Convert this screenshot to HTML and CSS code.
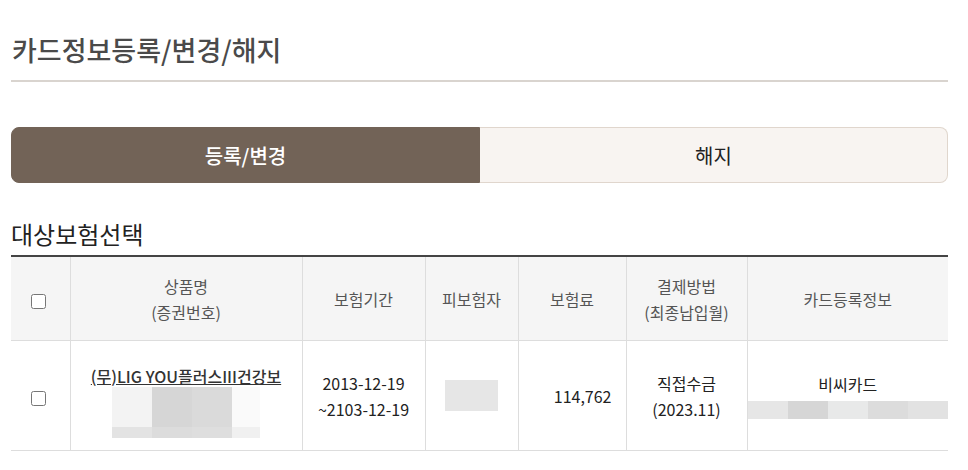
FILE: index.html
```html
<!DOCTYPE html>
<html>
<head>
    <meta charset="utf-8">
    <title>카드정보등록/변경/해지</title>
    <link rel="stylesheet" href="styles.css">
</head>
<body>
    <div class="wrap">
        <h1 class="page-title">카드정보등록/변경/해지</h1>

        <div class="tabs">
            <a href="#" class="tab active">등록/변경</a>
            <a href="#" class="tab">해지</a>
        </div>

        <h2 class="section-title">대상보험선택</h2>

        <table class="policy-table">
            <colgroup>
                <col style="width:59px">
                <col style="width:232px">
                <col style="width:123px">
                <col style="width:93px">
                <col style="width:108px">
                <col style="width:121px">
                <col style="width:201px">
            </colgroup>
            <thead>
                <tr>
                    <th><input type="checkbox" class="chk"></th>
                    <th>상품명<br>(증권번호)</th>
                    <th>보험기간</th>
                    <th>피보험자</th>
                    <th>보험료</th>
                    <th>결제방법<br>(최종납입월)</th>
                    <th>카드등록정보</th>
                </tr>
            </thead>
            <tbody>
                <tr>
                    <td><input type="checkbox" class="chk"></td>
                    <td class="product-cell">
                        <a href="#" class="product-name">(무)LIG YOU플러스III건강보</a>
                        <div class="mask mask-policy">
                            <span></span><span></span><span></span><span></span>
                            <span></span><span></span><span></span><span></span>
                        </div>
                    </td>
                    <td>2013-12-19<br>~2103-12-19</td>
                    <td><span class="mask-insured"></span></td>
                    <td class="amount">114,762</td>
                    <td>직접수금<br>(2023.11)</td>
                    <td class="card-cell">
                        <div class="card-name">비씨카드</div>
                        <div class="mask mask-card">
                            <span></span><span></span><span></span><span></span><span></span>
                        </div>
                    </td>
                </tr>
            </tbody>
        </table>
    </div>
</body>
</html>
```

FILE: styles.css
```css
html, body {
    margin: 0;
    padding: 0;
    background-color: #fff;
    font-family: "Noto Sans CJK KR", "Noto Sans", sans-serif;
    color: #222;
}

.wrap {
    padding: 0 20px 0 11px;
}

.page-title {
    margin: 32px 0 0;
    padding: 0 0 12px 1px;
    font-size: 27px;
    line-height: 36px;
    font-weight: 500;
    color: #4a4a4a;
    border-bottom: 2px solid #d9d4cf;
}

/* tabs */
.tabs {
    display: flex;
    margin-top: 45px;
}

.tab {
    flex: 1;
    display: flex;
    align-items: center;
    justify-content: center;
    height: 54px;
    font-size: 20px;
    color: #222;
    text-decoration: none;
    background-color: #f8f4f1;
    border: 1px solid #e0d6cd;
}

.tab:first-child {
    border-radius: 8px 0 0 8px;
}

.tab:last-child {
    border-left: none;
    border-radius: 0 8px 8px 0;
}

.tab.active {
    background-color: #726357;
    border-color: #726357;
    color: #fff;
    font-weight: 500;
}

.section-title {
    margin: 34px 0 4px;
    font-size: 24px;
    line-height: 34px;
    font-weight: 400;
    color: #222;
}

/* table */
.policy-table {
    width: 100%;
    table-layout: fixed;
    border-collapse: collapse;
    border-top: 2px solid #444;
}

.policy-table th,
.policy-table td {
    text-align: center;
    vertical-align: middle;
    border-bottom: 1px solid #ddd;
    border-left: 1px solid #ddd;
    padding: 0;
}

.policy-table th:first-child,
.policy-table td:first-child {
    border-left: none;
    padding-right: 4px;
}

.policy-table th {
    height: 83px;
    background-color: #f5f5f5;
    font-size: 16px;
    line-height: 26px;
    font-weight: 400;
    color: #555;
}

.policy-table td {
    height: 109px;
    font-size: 16px;
    line-height: 26px;
    color: #222;
}

.chk {
    width: 15px;
    height: 15px;
    margin: 0;
    vertical-align: middle;
}

.policy-table td.product-cell {
    height: 97px;
    padding-top: 12px;
}

.product-name {
    display: block;
    font-size: 16px;
    line-height: 22px;
    font-weight: 500;
    color: #333;
}

.policy-table td.amount {
    text-align: right;
    padding-right: 14px;
}

.card-name {
    font-size: 16px;
    line-height: 22px;
}

/* masked (blurred) values */
.mask {
    display: grid;
    margin: 0 auto;
}

.mask-policy {
    grid-template-columns: 40px 40px 40px 28px;
    grid-template-rows: 40px 11px;
    width: 148px;
}

.mask-policy span:nth-child(1) { background: #f3f3f3; }
.mask-policy span:nth-child(2) { background: #d6d6d6; }
.mask-policy span:nth-child(3) { background: #dadada; }
.mask-policy span:nth-child(4) { background: #fafafa; }
.mask-policy span:nth-child(5) { background: #e3e3e3; }
.mask-policy span:nth-child(6) { background: #dcdcdc; }
.mask-policy span:nth-child(7) { background: #dedede; }
.mask-policy span:nth-child(8) { background: #f0f0f0; }

.mask-insured {
    display: inline-block;
    width: 53px;
    height: 31px;
    background-color: #e6e6e6;
    vertical-align: middle;
}

.mask-card {
    grid-template-columns: repeat(5, 40px);
    grid-template-rows: 18px;
    width: 200px;
    margin: 6px 0 0;
}

.mask-card span:nth-child(1) { background: #e6e6e6; }
.mask-card span:nth-child(2) { background: #d6d6d6; }
.mask-card span:nth-child(3) { background: #e8e9e9; }
.mask-card span:nth-child(4) { background: #dcdcdc; }
.mask-card span:nth-child(5) { background: #e2e2e2; }
```
